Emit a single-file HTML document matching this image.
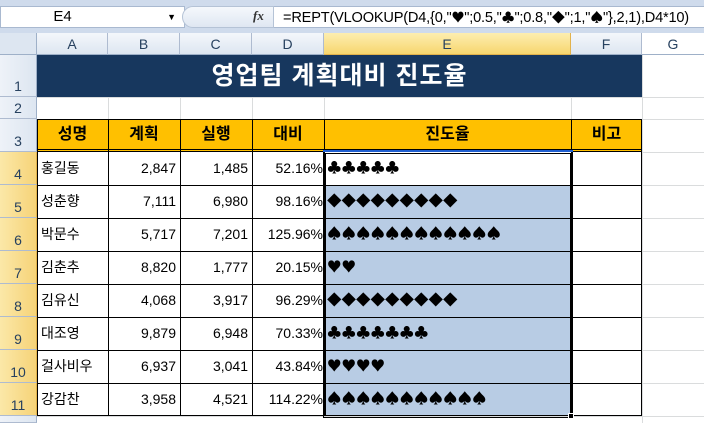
<!DOCTYPE html><html><head><meta charset="utf-8"><style>
*{margin:0;padding:0;box-sizing:border-box}
body{width:704px;height:423px;overflow:hidden;background:#fff;font-family:"Liberation Sans","Noto Sans CJK KR",sans-serif;position:relative}
.a{position:absolute}
.ch{position:absolute;top:33px;height:22px;background:linear-gradient(#f4f7fb,#dde6f1);border-right:1px solid #aebbd0;border-bottom:1px solid #9eb0c8;text-align:center;font-size:14px;line-height:22px;color:#27415f}
.rh{position:absolute;left:0;width:37px;background:linear-gradient(90deg,#eef2f8,#dde6f1);border-bottom:1px solid #aebbd0;border-right:1px solid #9eb0c8;text-align:center;font-size:14px;color:#27415f;display:flex;align-items:flex-end;justify-content:center;padding-bottom:2px}
.rh.s{background:linear-gradient(90deg,#fbe8a8,#f6d378);border-right:1px solid #e2b24c}
.c{position:absolute;font-size:14px;line-height:32px;white-space:nowrap;overflow:hidden;color:#000}
.su{font-family:"Noto Sans CJK KR","WenQuanYi Zen Hei",sans-serif;font-size:14.5px}
.g{position:absolute;background:#dadcdd}
.k{font-family:"Noto Sans CJK KR",sans-serif;font-size:13px}
</style></head><body>
<div class="a" style="left:0;top:0;width:704px;height:33px;background:#cfdbec"></div>
<div class="a" style="left:0;top:6px;width:185px;height:22px;background:#fff;border:1px solid #a9b9d0;font-size:15px;text-align:center;line-height:20px;padding-right:60px">E4<span style="position:absolute;right:8px;font-size:9px">▼</span></div>
<div class="a" style="left:182px;top:6px;width:92px;height:22px;background:linear-gradient(#f5f8fc,#dfe7f2);border-radius:11px 0 0 11px;border:1px solid #b5c3d6"></div>
<div class="a" style="left:253px;top:8px;font-family:'Liberation Serif',serif;font-style:italic;font-weight:bold;font-size:13px;color:#333">fx</div>
<div class="a" style="left:274px;top:6px;width:430px;height:22px;background:#fff;border-top:1px solid #a9b9d0;border-bottom:1px solid #a9b9d0;font-size:14.6px;line-height:20px;padding-left:9px;white-space:nowrap;overflow:hidden;letter-spacing:-0.2px">=REPT(VLOOKUP(D4,{0,"<span class="k">♥</span>";0.5,"<span class="k">♣</span>";0.8,"<span class="k">◆</span>";1,"<span class="k">♠</span>"},2,1),D4*10)</div>
<div class="a" style="left:0;top:33px;width:37px;height:22px;background:#dde6f1;border-right:1px solid #9eb0c8;border-bottom:1px solid #9eb0c8"></div>
<div class="ch" style="left:37px;width:71px">A</div>
<div class="ch" style="left:108px;width:72px">B</div>
<div class="ch" style="left:180px;width:72px">C</div>
<div class="ch" style="left:252px;width:72px">D</div>
<div class="ch" style="left:324px;width:247px;background:linear-gradient(#fdeeb0,#f7d66f);border-bottom:1px solid #e2b24c;border-right:1px solid #e2b24c">E</div>
<div class="ch" style="left:571px;width:71px">F</div>
<div class="ch" style="left:642px;width:62px;background:#fff;border-right:none">G</div>
<div class="rh" style="top:55px;height:42px">1</div>
<div class="rh" style="top:97px;height:22px">2</div>
<div class="rh" style="top:119px;height:33px">3</div>
<div class="rh s" style="top:152px;height:33px">4</div>
<div class="rh s" style="top:185px;height:33px">5</div>
<div class="rh s" style="top:218px;height:33px">6</div>
<div class="rh s" style="top:251px;height:33px">7</div>
<div class="rh s" style="top:284px;height:33px">8</div>
<div class="rh s" style="top:317px;height:33px">9</div>
<div class="rh s" style="top:350px;height:33px">10</div>
<div class="rh s" style="top:383px;height:33px">11</div>
<div class="rh" style="top:416px;height:7px"></div>
<div class="g" style="left:642px;top:55px;width:1px;height:368px"></div>
<div class="g" style="left:37px;top:97px;width:667px;height:1px"></div>
<div class="g" style="left:37px;top:119px;width:667px;height:1px"></div>
<div class="g" style="left:642px;top:152px;width:62px;height:1px"></div>
<div class="g" style="left:642px;top:185px;width:62px;height:1px"></div>
<div class="g" style="left:642px;top:218px;width:62px;height:1px"></div>
<div class="g" style="left:642px;top:251px;width:62px;height:1px"></div>
<div class="g" style="left:642px;top:284px;width:62px;height:1px"></div>
<div class="g" style="left:642px;top:317px;width:62px;height:1px"></div>
<div class="g" style="left:642px;top:350px;width:62px;height:1px"></div>
<div class="g" style="left:642px;top:383px;width:62px;height:1px"></div>
<div class="g" style="left:37px;top:416px;width:667px;height:1px"></div>
<div class="g" style="left:108px;top:97px;width:1px;height:22px"></div>
<div class="g" style="left:180px;top:97px;width:1px;height:22px"></div>
<div class="g" style="left:252px;top:97px;width:1px;height:22px"></div>
<div class="g" style="left:324px;top:97px;width:1px;height:22px"></div>
<div class="g" style="left:571px;top:97px;width:1px;height:22px"></div>
<div class="a" style="left:37px;top:55px;width:605px;height:42px;background:#17375e;color:#fff;font-weight:bold;font-size:25px;text-align:center;line-height:42px;letter-spacing:1px">영업팀 계획대비 진도율</div>
<div class="a" style="left:37px;top:119px;width:605px;height:33px;background:#ffc000;border:1px solid #000"></div>
<div class="a" style="left:324px;top:152px;width:247px;height:264px;background:#b8cce4"></div>
<div class="a" style="left:324px;top:152px;width:247px;height:33px;background:#fff"></div>
<div class="a" style="left:37px;top:119px;width:605px;height:297px;border:1px solid #000;border-top:none"></div>
<div class="a" style="left:108px;top:119px;width:1px;height:297px;background:#000"></div>
<div class="a" style="left:180px;top:119px;width:1px;height:297px;background:#000"></div>
<div class="a" style="left:252px;top:119px;width:1px;height:297px;background:#000"></div>
<div class="a" style="left:324px;top:119px;width:1px;height:297px;background:#000"></div>
<div class="a" style="left:571px;top:119px;width:1px;height:297px;background:#000"></div>
<div class="a" style="left:37px;top:185px;width:605px;height:1px;background:#000"></div>
<div class="a" style="left:37px;top:218px;width:605px;height:1px;background:#000"></div>
<div class="a" style="left:37px;top:251px;width:605px;height:1px;background:#000"></div>
<div class="a" style="left:37px;top:284px;width:605px;height:1px;background:#000"></div>
<div class="a" style="left:37px;top:317px;width:605px;height:1px;background:#000"></div>
<div class="a" style="left:37px;top:350px;width:605px;height:1px;background:#000"></div>
<div class="a" style="left:37px;top:383px;width:605px;height:1px;background:#000"></div>
<div class="a" style="left:37px;top:149px;width:605px;height:3px;border-top:1px solid #000;border-bottom:1px solid #000"></div>
<div class="a" style="left:323px;top:151px;width:250px;height:267px;border:3px double #000"></div>
<div class="a" style="left:323px;top:150px;width:250px;height:2px;background:#1f5fd0"></div>
<div class="a" style="left:568px;top:413px;width:6px;height:6px;background:#000;border:1px solid #fff"></div>
<div class="c" style="left:37px;top:119px;width:71px;text-align:center;font-weight:bold;font-size:16px">성명</div>
<div class="c" style="left:108px;top:119px;width:72px;text-align:center;font-weight:bold;font-size:16px">계획</div>
<div class="c" style="left:180px;top:119px;width:72px;text-align:center;font-weight:bold;font-size:16px">실행</div>
<div class="c" style="left:252px;top:119px;width:72px;text-align:center;font-weight:bold;font-size:16px">대비</div>
<div class="c" style="left:324px;top:119px;width:247px;text-align:center;font-weight:bold;font-size:16px">진도율</div>
<div class="c" style="left:571px;top:119px;width:71px;text-align:center;font-weight:bold;font-size:16px">비고</div>
<div class="c" style="left:41px;top:152px">홍길동</div><div class="c" style="left:108px;top:152px;width:68px;text-align:right">2,847</div><div class="c" style="left:180px;top:152px;width:68px;text-align:right">1,485</div><div class="c" style="left:252px;top:152px;width:71px;text-align:right">52.16%</div><div class="c su" style="left:327px;top:152px">♣♣♣♣♣</div>
<div class="c" style="left:41px;top:185px">성춘향</div><div class="c" style="left:108px;top:185px;width:68px;text-align:right">7,111</div><div class="c" style="left:180px;top:185px;width:68px;text-align:right">6,980</div><div class="c" style="left:252px;top:185px;width:71px;text-align:right">98.16%</div><div class="c su" style="left:327px;top:185px">◆◆◆◆◆◆◆◆◆</div>
<div class="c" style="left:41px;top:218px">박문수</div><div class="c" style="left:108px;top:218px;width:68px;text-align:right">5,717</div><div class="c" style="left:180px;top:218px;width:68px;text-align:right">7,201</div><div class="c" style="left:252px;top:218px;width:71px;text-align:right">125.96%</div><div class="c su" style="left:327px;top:218px">♠♠♠♠♠♠♠♠♠♠♠♠</div>
<div class="c" style="left:41px;top:251px">김춘추</div><div class="c" style="left:108px;top:251px;width:68px;text-align:right">8,820</div><div class="c" style="left:180px;top:251px;width:68px;text-align:right">1,777</div><div class="c" style="left:252px;top:251px;width:71px;text-align:right">20.15%</div><div class="c su" style="left:327px;top:251px">♥♥</div>
<div class="c" style="left:41px;top:284px">김유신</div><div class="c" style="left:108px;top:284px;width:68px;text-align:right">4,068</div><div class="c" style="left:180px;top:284px;width:68px;text-align:right">3,917</div><div class="c" style="left:252px;top:284px;width:71px;text-align:right">96.29%</div><div class="c su" style="left:327px;top:284px">◆◆◆◆◆◆◆◆◆</div>
<div class="c" style="left:41px;top:317px">대조영</div><div class="c" style="left:108px;top:317px;width:68px;text-align:right">9,879</div><div class="c" style="left:180px;top:317px;width:68px;text-align:right">6,948</div><div class="c" style="left:252px;top:317px;width:71px;text-align:right">70.33%</div><div class="c su" style="left:327px;top:317px">♣♣♣♣♣♣♣</div>
<div class="c" style="left:41px;top:350px">걸사비우</div><div class="c" style="left:108px;top:350px;width:68px;text-align:right">6,937</div><div class="c" style="left:180px;top:350px;width:68px;text-align:right">3,041</div><div class="c" style="left:252px;top:350px;width:71px;text-align:right">43.84%</div><div class="c su" style="left:327px;top:350px">♥♥♥♥</div>
<div class="c" style="left:41px;top:383px">강감찬</div><div class="c" style="left:108px;top:383px;width:68px;text-align:right">3,958</div><div class="c" style="left:180px;top:383px;width:68px;text-align:right">4,521</div><div class="c" style="left:252px;top:383px;width:71px;text-align:right">114.22%</div><div class="c su" style="left:327px;top:383px">♠♠♠♠♠♠♠♠♠♠♠</div>
</body></html>
